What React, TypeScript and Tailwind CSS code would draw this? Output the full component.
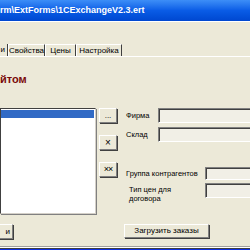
import React from 'react';

const font = { fontFamily: '"Liberation Sans", "DejaVu Sans", sans-serif' };

function Btn({ children, className = '' }: { children?: React.ReactNode; className?: string }) {
  return (
    <div
      className={`flex items-center justify-center bg-[#ece9d8] border border-t-white border-l-white border-b-[#808080] border-r-[#808080] shadow-[1px_1px_0_#404040] text-[8px] text-black ${className}`}
    >
      {children}
    </div>
  );
}

function Field({ className = '' }: { className?: string }) {
  return (
    <div
      className={`bg-[#f1efe6] border border-t-[#808080] border-l-[#808080] border-b-white border-r-white shadow-[inset_1px_1px_0_#404040] ${className}`}
    />
  );
}

export default function App() {
  return (
    <div className="w-[250px] h-[250px] overflow-hidden bg-[#ece9d8] flex flex-col" style={font}>
      {/* заголовок окна */}
      <div className="h-[21px] shrink-0 bg-gradient-to-b from-[#3d8ef7] via-[#0a5ce6] to-[#0047d0] flex items-center">
        <span className="text-white font-bold text-[9px] whitespace-nowrap">
          rm\ExtForms\1CExchangeV2.3.ert
        </span>
      </div>

      {/* панель */}
      <div className="h-[23px] shrink-0 border-t border-t-white" />

      {/* вкладки */}
      <div className="h-[13px] shrink-0 flex items-stretch text-[8px] text-black border-b border-b-white">
        <div className="w-[8px] border-r border-r-[#404040] flex items-center justify-end pr-[2px]">и</div>
        <div className="w-[37px] border-t border-t-white border-l border-l-white border-r border-r-[#404040] flex items-center justify-center">
          Свойства
        </div>
        <div className="w-[31px] border-t border-t-white border-l border-l-white border-r border-r-[#404040] flex items-center justify-center">
          Цены
        </div>
        <div className="w-[46px] border-t border-t-white border-l border-l-white border-r border-r-[#404040] flex items-center justify-center">
          Настройка
        </div>
      </div>

      {/* заголовок формы */}
      <div className="h-[51px] shrink-0 flex items-center pb-[6px]">
        <span className="text-[11px] font-bold text-[#7a0a0a] whitespace-nowrap">йтом</span>
      </div>

      {/* основная часть */}
      <div className="flex shrink-0 h-[115px]">
        <div className="w-[96px] h-[106px] bg-white border border-t-[#404040] border-l-[#404040] border-b-[#d4d0c8] border-r-[#d4d0c8] shadow-[1px_1px_0_#808080] pt-[1px]">
          <div className="h-[8px] bg-[#316ac5] mr-[1px]" />
        </div>

        <div className="ml-[3px] w-[18px] flex flex-col gap-[12px]">
          <Btn className="h-[15px]">...</Btn>
          <Btn className="h-[15px] text-[10px]">×</Btn>
          <Btn className="h-[15px] text-[9px] tracking-[-1px]">××</Btn>
        </div>

        <div className="ml-[9px] flex-1 flex flex-col text-[7.5px] text-black">
          <div className="flex items-center h-[15px]">
            <span className="w-[32px]">Фирма</span>
            <Field className="h-[15px] flex-1 -mr-[20px]" />
          </div>
          <div className="flex items-center h-[15px] mt-[4px]">
            <span className="w-[32px]">Склад</span>
            <Field className="h-[15px] flex-1 -mr-[20px]" />
          </div>
          <div className="flex items-center h-[13px] mt-[25px]">
            <span className="w-[79px] whitespace-nowrap">Группа контрагентов</span>
            <Field className="h-[13px] flex-1 -mr-[20px]" />
          </div>
          <div className="flex items-start h-[15px] mt-[3px]">
            <span className="w-[79px] pl-[3px] leading-[9px] pt-[2px]">
              Тип цен для
              <br />
              договора
            </span>
            <Field className="h-[15px] flex-1 -mr-[20px]" />
          </div>
        </div>
      </div>

      {/* кнопки внизу */}
      <div className="h-[19px] shrink-0 flex items-start pt-[1px]">
        <Btn className="w-[14px] h-[15px] -ml-[1px] justify-end pr-[2px]">и</Btn>
        <Btn className="ml-[111px] w-[85px] h-[14px] text-[7.5px]">Загрузить заказы</Btn>
      </div>

      <div className="h-[4px] shrink-0" />
      <div className="h-px shrink-0 bg-[#a0a0a0]" />
      <div className="h-px shrink-0 bg-white" />
      <div className="h-px shrink-0 bg-[#404040]" />
      <div className="flex-1 bg-[#0b2ee6]" />
    </div>
  );
}
